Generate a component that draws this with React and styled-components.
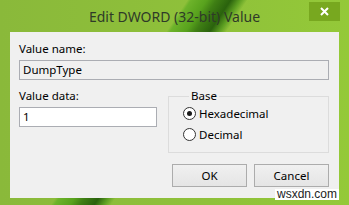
import React from 'react';
import styled, { createGlobalStyle } from 'styled-components';

const Global = createGlobalStyle`
  html, body {
    margin: 0;
    padding: 0;
  }
  body {
    width: 349px;
    height: 205px;
    overflow: hidden;
    font-family: "Noto Sans", "Open Sans", sans-serif;
  }
`;

// green aero frame, with the wallpaper leaf showing through it
const Window = styled.div`
  position: relative;
  box-sizing: border-box;
  width: 349px;
  height: 205px;
  padding: 0 10px 7px 10px;
  display: flex;
  flex-direction: column;
  background:
    linear-gradient(123.7deg,
      transparent 156px,
      #6db32a 159px,
      #58a21d 172px,
      #3f7f14 180px,
      #2a620d 192px,
      #5d9f22 200px,
      transparent 206px),
    linear-gradient(90deg, #8ab93a 0%, #8fc13a 60%, #94c938 100%);
`;

const TitleBar = styled.div`
  height: 32px;
  display: flex;
  align-items: center;
  justify-content: center;
  font-size: 14px;
  color: #2f3a28;
`;

const CloseButton = styled.div`
  position: absolute;
  top: 2px;
  right: 9px;
  width: 31px;
  height: 19px;
  display: flex;
  align-items: center;
  justify-content: center;
  background: #78a81f;
`;

const Client = styled.div`
  flex: 1;
  display: flex;
  flex-direction: column;
  background: #f0f0f0;
  padding: 9px 10px 0 9px;
  font-size: 11.5px;
  color: #000;
`;

const Label = styled.div`
  line-height: 16px;
  height: 16px;
`;

const Field = styled.div`
  box-sizing: border-box;
  height: 20px;
  margin-top: 3px;
  width: ${p => (p.$wide ? '100%' : '138px')};
  border: 1px solid #abadb3;
  background: ${p => (p.$readOnly ? '#f0f0f0' : '#fff')};
  padding-left: 3px;
  line-height: 18px;
`;

const Row = styled.div`
  display: flex;
  gap: 11px;
  margin-top: 8px;
`;

const Column = styled.div`
  display: flex;
  flex-direction: column;
`;

const GroupBox = styled.fieldset`
  flex: 1;
  margin: 0;
  min-width: 0;
  box-sizing: border-box;
  height: 65px;
  border: 1px solid #dcdcdc;
  padding: 1px 6px 0 14px;
  display: flex;
  flex-direction: column;
  gap: 5px;
`;

const Legend = styled.legend`
  margin-left: 6px;
  padding: 0 2px;
  line-height: 16px;
  font-size: 11.5px;
`;

const RadioRow = styled.label`
  display: flex;
  align-items: center;
  height: 16px;
  gap: 3px;
`;

const RadioCircle = styled.span`
  box-sizing: border-box;
  width: 13px;
  height: 13px;
  border-radius: 50%;
  border: 1px solid #333;
  background: #fff;
  display: flex;
  align-items: center;
  justify-content: center;

  &::after {
    content: '';
    width: 5px;
    height: 5px;
    border-radius: 50%;
    background: ${p => (p.$checked ? '#1a1a1a' : 'transparent')};
  }
`;

const Buttons = styled.div`
  display: flex;
  justify-content: flex-end;
  gap: 7px;
  margin-top: 11px;
`;

const Button = styled.div`
  box-sizing: border-box;
  width: 75px;
  height: 23px;
  border: 1px solid #acacac;
  background: linear-gradient(#f0f0f0, #e5e5e5);
  display: flex;
  align-items: center;
  justify-content: center;
  font-size: 11.5px;
`;

const Watermark = styled.div`
  position: absolute;
  right: 10px;
  bottom: 5px;
  height: 11px;
  line-height: 11px;
  padding: 0 2px;
  background: #fff;
  color: #222;
  font-family: "Liberation Sans", Arial, sans-serif;
  font-size: 12px;
`;

export default function App() {
  return (
    <>
      <Global />
      <Window>
        <TitleBar>Edit DWORD (32-bit) Value</TitleBar>
        <CloseButton>
          <svg width="9" height="9" viewBox="0 0 9 9">
            <path d="M1 1L8 8M8 1L1 8" stroke="#fff" strokeWidth="2" />
          </svg>
        </CloseButton>
        <Client>
          <Label>Value name:</Label>
          <Field $wide $readOnly>DumpType</Field>
          <Row>
            <Column>
              <Label>Value data:</Label>
              <Field>1</Field>
            </Column>
            <GroupBox>
              <Legend>Base</Legend>
              <RadioRow>
                <RadioCircle $checked />
                Hexadecimal
              </RadioRow>
              <RadioRow>
                <RadioCircle />
                Decimal
              </RadioRow>
            </GroupBox>
          </Row>
          <Buttons>
            <Button>OK</Button>
            <Button>Cancel</Button>
          </Buttons>
        </Client>
        <Watermark>wsxdn.com</Watermark>
      </Window>
    </>
  );
}
